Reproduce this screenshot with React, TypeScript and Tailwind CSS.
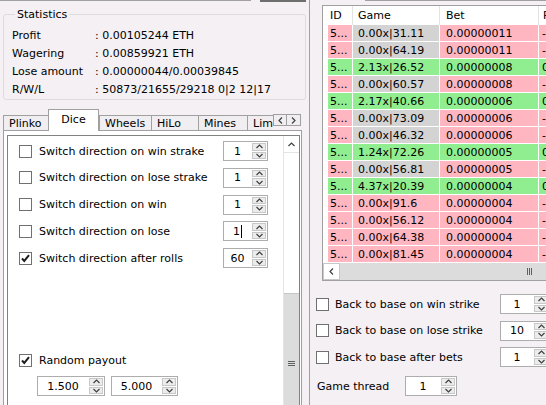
import React from "react";

type Kind = "lose" | "win" | "cold";

const bets: { game: string; bet: string; profit: string; kind: Kind }[] = [
  { game: "0.00x|31.11", bet: "0.00000011", profit: "-0.00000011", kind: "lose" },
  { game: "0.00x|64.19", bet: "0.00000011", profit: "-0.00000011", kind: "lose" },
  { game: "2.13x|26.52", bet: "0.00000008", profit: "0.00000009", kind: "win" },
  { game: "0.00x|60.57", bet: "0.00000008", profit: "-0.00000008", kind: "lose" },
  { game: "2.17x|40.66", bet: "0.00000006", profit: "0.00000007", kind: "win" },
  { game: "0.00x|73.09", bet: "0.00000006", profit: "-0.00000006", kind: "lose" },
  { game: "0.00x|46.32", bet: "0.00000006", profit: "-0.00000006", kind: "lose" },
  { game: "1.24x|72.26", bet: "0.00000005", profit: "0.00000001", kind: "win" },
  { game: "0.00x|56.81", bet: "0.00000005", profit: "-0.00000005", kind: "lose" },
  { game: "4.37x|20.39", bet: "0.00000004", profit: "0.00000013", kind: "win" },
  { game: "0.00x|91.6", bet: "0.00000004", profit: "-0.00000004", kind: "cold" },
  { game: "0.00x|56.12", bet: "0.00000004", profit: "-0.00000004", kind: "cold" },
  { game: "0.00x|64.38", bet: "0.00000004", profit: "-0.00000004", kind: "cold" },
  { game: "0.00x|81.45", bet: "0.00000004", profit: "-0.00000004", kind: "cold" },
];

const stats = [
  ["Profit", "0.00105244 ETH"],
  ["Wagering", "0.00859921 ETH"],
  ["Lose amount", "0.00000044/0.00039845"],
  ["R/W/L", "50873/21655/29218 0|2 12|17"],
];

const diceOptions = [
  { label: "Switch direction on win strake", value: "1" },
  { label: "Switch direction on lose strake", value: "1" },
  { label: "Switch direction on win", value: "1" },
  { label: "Switch direction on lose", value: "1", caret: true },
  { label: "Switch direction after rolls", value: "60", checked: true },
];

const baseOptions = [
  { label: "Back to base on win strike", value: "1" },
  { label: "Back to base on lose strike", value: "10" },
  { label: "Back to base after bets", value: "1" },
];

function CheckBox({ checked }: { checked?: boolean }) {
  return (
    <span className="flex h-[13px] w-[13px] shrink-0 items-center justify-center border border-[#707070] bg-white">
      {checked && (
        <svg width="9" height="9" viewBox="0 0 9 9">
          <path d="M1 4.5 L3.3 7 L8 1.2" stroke="#1e1e1e" strokeWidth="2" fill="none" />
        </svg>
      )}
    </span>
  );
}

function Chevron({ dir }: { dir: "up" | "down" | "left" | "right" }) {
  const d = {
    up: "M0.5 4 L3.5 1 L6.5 4",
    down: "M0.5 1 L3.5 4 L6.5 1",
    left: "M4 0.5 L1 3.5 L4 6.5",
    right: "M1 0.5 L4 3.5 L1 6.5",
  }[dir];
  const vertical = dir === "up" || dir === "down";
  return (
    <svg width={vertical ? 7 : 5} height={vertical ? 5 : 7} viewBox={vertical ? "0 0 7 5" : "0 0 5 7"}>
      <path d={d} stroke="#404040" strokeWidth="1.2" fill="none" />
    </svg>
  );
}

function Spin({ value, className, caret }: { value: string; className: string; caret?: boolean }) {
  return (
    <div className={`flex h-[20px] shrink-0 border border-[#adadad] bg-white ${className}`}>
      <div className="flex flex-1 items-center justify-center">
        {value}
        {caret && <span className="ml-[1px] h-[13px] w-px bg-black" />}
      </div>
      <div className="flex w-[16px] flex-col gap-px p-px">
        <span className="flex flex-1 items-center justify-center border border-[#c8c8c8] bg-[#ececec]">
          <Chevron dir="up" />
        </span>
        <span className="flex flex-1 items-center justify-center border border-[#c8c8c8] bg-[#ececec]">
          <Chevron dir="down" />
        </span>
      </div>
    </div>
  );
}

function Tab({ label, className, active }: { label: string; className: string; active?: boolean }) {
  if (active) {
    return (
      <div
        className={`relative z-10 -mb-px flex h-[22px] shrink-0 justify-center border-x border-t border-[#a0a0a0] bg-white pt-[3px] ${className}`}
      >
        {label}
      </div>
    );
  }
  return (
    <div
      className={`flex h-[15px] shrink-0 items-center overflow-hidden border-l border-t border-[#a0a0a0] bg-[#f0eef0] pl-[5px] pt-px ${className}`}
    >
      {label}
    </div>
  );
}

const rowColor: Record<Kind, string> = {
  lose: "bg-[#ffb6c1]",
  win: "bg-[#90ee90]",
  cold: "bg-[#ffb6c1]",
};

const gameColor: Record<Kind, string> = {
  lose: "bg-[#d3d3d3]",
  win: "bg-[#90ee90]",
  cold: "bg-[#ffb6c1]",
};

export default function App() {
  return (
    <div className="flex h-[405px] w-[546px] overflow-hidden bg-[#f4f0f4] font-['DejaVu_Sans',sans-serif] text-[11px] leading-[13px] text-black">
      {/* left side */}
      <div className="flex w-[307px] shrink-0 flex-col">
        <div className="flex h-[3px] shrink-0">
          <div className="w-[251px] border-t border-[#a0a0a0]" />
          <div className="ml-[9px] w-[46px] border-t-2 border-[#6e6e6e]" />
        </div>

        <fieldset className="ml-[3px] mt-[5px] w-[303px] shrink-0 rounded-[3px] border border-[#dcdcdc] pb-[1px] pl-[8px] pt-[5px]">
          <legend className="ml-[3px] px-[2px]">Statistics</legend>
          {stats.map(([k, v]) => (
            <div key={k} className="flex h-[18px] items-center">
              <span className="w-[83px]">{k}</span>
              <span>: {v}</span>
            </div>
          ))}
        </fieldset>

        <div className="ml-[3px] mt-[9px] flex h-[21px] shrink-0 items-end">
          <Tab label="Plinko" className="w-[45px]" />
          <Tab label="Dice" className="w-[51px]" active />
          <Tab label="Wheels" className="w-[52px]" />
          <Tab label="HiLo" className="w-[47px]" />
          <Tab label="Mines" className="w-[49px]" />
          <Tab label="Lim" className="w-[26px]" />
          <div className="mb-[4px] flex self-end">
            <span className="flex h-[12px] w-[14px] items-center justify-center border border-[#a0a0a0] bg-[#f0eef0]">
              <Chevron dir="left" />
            </span>
            <span className="-ml-px flex h-[12px] w-[15px] items-center justify-center border border-[#a0a0a0] bg-[#f0eef0]">
              <Chevron dir="right" />
            </span>
          </div>
        </div>

        <div className="ml-[3px] flex w-[299px] flex-1 flex-col border-x border-t border-[#a0a0a0] bg-white pl-[3px] pt-[4px]">
          <div className="flex w-[293px] flex-1 border-x border-t border-[#828282] bg-white">
            <div className="flex flex-1 flex-col pl-[11px] pt-[5px]">
              <div className="flex flex-col gap-[6.75px]">
                {diceOptions.map((o) => (
                  <div key={o.label} className="flex h-[20px] items-center">
                    <div className="flex w-[204px] items-center gap-[7px]">
                      <CheckBox checked={o.checked} />
                      <span>{o.label}</span>
                    </div>
                    <Spin value={o.value} caret={o.caret} className="w-[45px]" />
                  </div>
                ))}
              </div>

              <div className="mt-[82px] flex h-[20px] items-center gap-[7px]">
                <CheckBox checked />
                <span>Random payout</span>
              </div>
              <div className="ml-[18px] mt-[6px] flex gap-[6px]">
                <Spin value="1.500" className="w-[68px]" />
                <Spin value="5.000" className="w-[67px]" />
              </div>
            </div>

            {/* vertical scrollbar */}
            <div className="flex w-[16px] flex-col border-l border-[#e4e4e4] bg-white">
              <div className="flex h-[17px] items-center justify-center border-b border-[#e4e4e4]">
                <Chevron dir="up" />
              </div>
              <div className="h-[140px]" />
              <div className="flex flex-1 flex-col items-center border-t border-[#c6c6c6] bg-[#dcdcdc]">
                <div className="mt-[67px] flex w-[7px] flex-col gap-px">
                  <span className="h-px bg-[#606060]" />
                  <span className="h-px bg-[#606060]" />
                  <span className="h-px bg-[#606060]" />
                </div>
              </div>
            </div>
          </div>
        </div>
      </div>

      {/* right side */}
      <div className="ml-[2px] flex flex-1 flex-col overflow-hidden border-l border-[#a0a0a0]">
        <div className="flex h-[5px] shrink-0">
          <div className="ml-[55px] flex-1 border-t border-[#a0a0a0]" />
        </div>

        <div className="ml-[12px] flex h-[276px] w-[280px] shrink-0 flex-col overflow-hidden border border-[#a0a0a0] bg-white">
          <div className="flex h-[19px] shrink-0 items-center pl-[5px]">
            <span className="flex h-full w-[25px] shrink-0 items-center border-r border-[#e3e3e3] pl-[2px]">ID</span>
            <span className="flex h-full w-[87px] shrink-0 items-center border-r border-[#e3e3e3] pl-[5px]">Game</span>
            <span className="flex h-full w-[99px] shrink-0 items-center border-r border-[#e3e3e3] pl-[6px]">Bet</span>
            <span className="flex h-full min-w-0 flex-1 items-center overflow-hidden whitespace-nowrap pl-[4px]">Profit</span>
          </div>
          {bets.map((b, i) => (
            <div key={i} className="flex h-[17px] shrink-0 gap-px pb-px pl-[5px]">
              <span className={`flex w-[24px] shrink-0 items-center pl-[2px] ${rowColor[b.kind]}`}>5...</span>
              <span className={`flex w-[86px] shrink-0 items-center pl-[5px] ${gameColor[b.kind]}`}>{b.game}</span>
              <span className={`flex w-[98px] shrink-0 items-center pl-[6px] ${rowColor[b.kind]}`}>{b.bet}</span>
              <span
                className={`flex min-w-0 flex-1 items-center overflow-hidden whitespace-nowrap pl-[3px] ${rowColor[b.kind]}`}
              >
                {b.profit}
              </span>
            </div>
          ))}
          <div className="flex h-[17px] shrink-0 bg-[#dcdcdc]">
            <span className="flex w-[17px] items-center justify-center border border-[#c8c8c8] bg-white">
              <Chevron dir="left" />
            </span>
            <div className="ml-[187px] flex items-center gap-px">
              <span className="h-[7px] w-px bg-[#606060]" />
              <span className="h-[7px] w-px bg-[#606060]" />
              <span className="h-[7px] w-px bg-[#606060]" />
            </div>
          </div>
        </div>

        <div className="mt-[13px] flex flex-col gap-[6.5px] pl-[6px]">
          {baseOptions.map((o) => (
            <div key={o.label} className="flex h-[20px] items-center">
              <div className="flex w-[184px] shrink-0 items-center gap-[6px]">
                <CheckBox />
                <span>{o.label}</span>
              </div>
              <Spin value={o.value} className="w-[50px]" />
            </div>
          ))}
        </div>

        <div className="mt-[9px] flex h-[20px] items-center pl-[6px]">
          <span className="w-[89px] shrink-0 pl-[1px]">Game thread</span>
          <Spin value="1" className="w-[52px]" />
        </div>
      </div>
    </div>
  );
}
